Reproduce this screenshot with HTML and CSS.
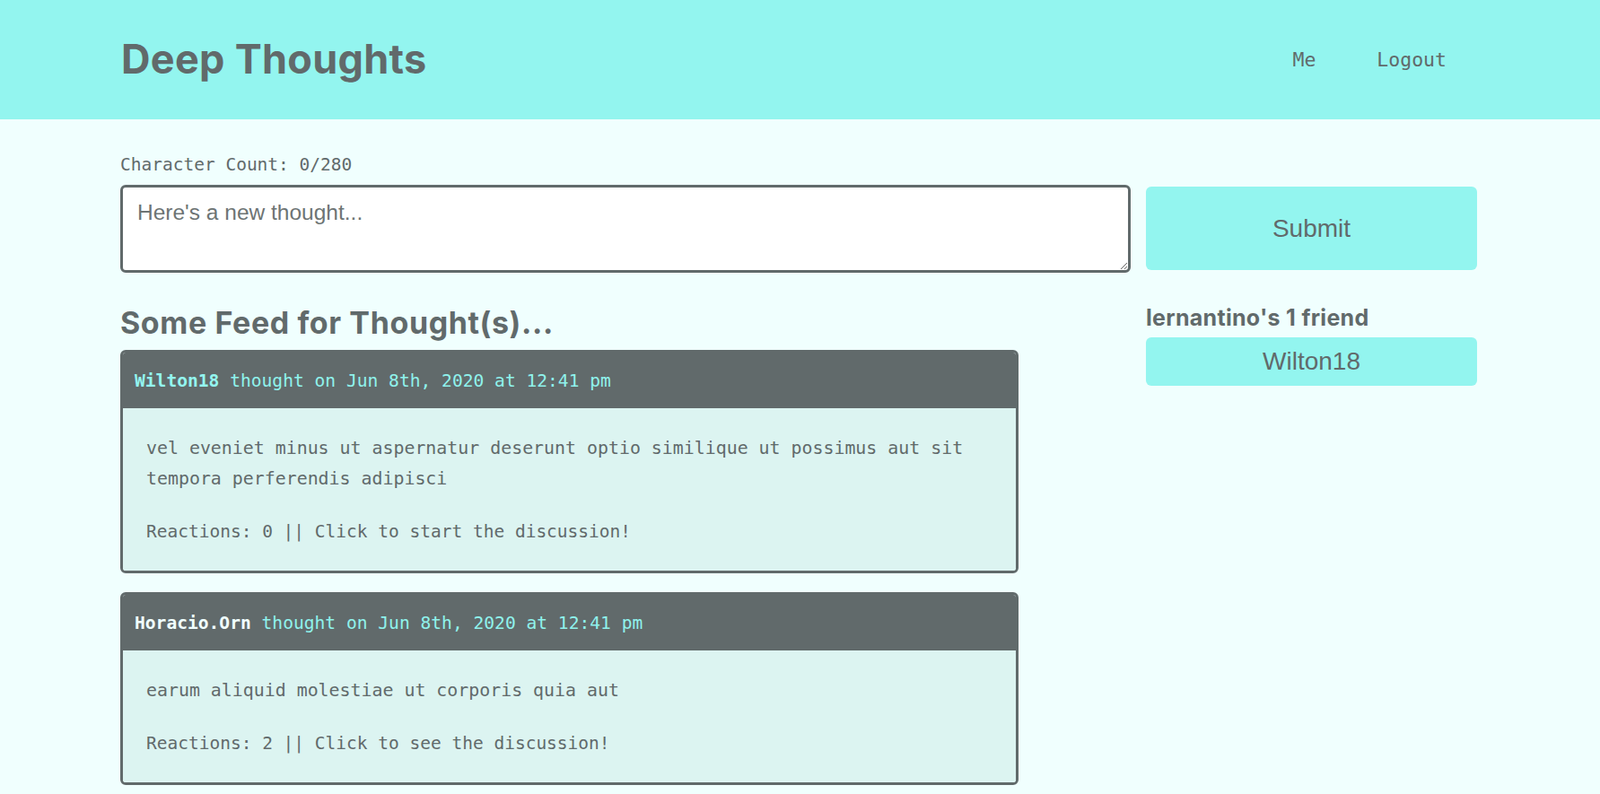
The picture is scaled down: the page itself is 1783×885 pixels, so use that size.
FILE: index.html
```html
<!DOCTYPE html>
<html lang="en">
<head>
<meta charset="utf-8">
<title>Deep Thoughts</title>
<link rel="stylesheet" href="styles.css">
</head>
<body>
<header class="site-header">
  <div class="container header-inner">
    <h1 class="brand">Deep Thoughts</h1>
    <nav class="nav">
      <a class="nav-link" href="#">Me</a>
      <a class="nav-link" href="#">Logout</a>
    </nav>
  </div>
</header>
<main class="container main">
  <form class="thought-form">
    <div class="form-left">
      <p class="char-count">Character Count: 0/280</p>
      <textarea class="thought-input" placeholder="Here's a new thought..."></textarea>
    </div>
    <button class="btn submit-btn" type="button">Submit</button>
  </form>
  <div class="content-row">
    <section class="feed">
      <h2 class="feed-title">Some Feed for Thought(s)...</h2>
      <article class="card">
        <div class="card-header"><span class="author author-teal">Wilton18</span> thought on Jun 8th, 2020 at 12:41 pm</div>
        <div class="card-body">
          <p class="card-text">vel eveniet minus ut aspernatur deserunt optio similique ut possimus aut sit tempora perferendis adipisci</p>
          <p class="card-meta">Reactions: 0 || Click to start the discussion!</p>
        </div>
      </article>
      <article class="card">
        <div class="card-header"><span class="author author-light">Horacio.Orn</span> thought on Jun 8th, 2020 at 12:41 pm</div>
        <div class="card-body">
          <p class="card-text">earum aliquid molestiae ut corporis quia aut</p>
          <p class="card-meta">Reactions: 2 || Click to see the discussion!</p>
        </div>
      </article>
    </section>
    <aside class="friends">
      <h3 class="friends-title">lernantino's 1 friend</h3>
      <a class="btn friend-btn" href="#">Wilton18</a>
    </aside>
  </div>
</main>
</body>
</html>
```
FILE: styles.css
```css
html, body {
  margin: 0;
  padding: 0;
}
body {
  background: #f0fffe;
  color: #616a6b;
  font-family: "DejaVu Sans Mono", "Liberation Mono", monospace;
  min-height: 885px;
}
.container {
  width: 1512px;
  margin-left: 134px;
}
.site-header {
  background: #93f5ef;
  height: 133px;
}
.header-inner {
  display: flex;
  align-items: center;
  justify-content: space-between;
  height: 133px;
}
.brand {
  margin: 0 0 2px 1px;
  font-family: "Inter", "Lato", sans-serif;
  font-weight: 700;
  font-size: 45px;
  letter-spacing: 0.3px;
  line-height: 1;
  color: #616a6b;
}
.nav {
  display: flex;
  margin-bottom: 1px;
}
.nav-link {
  color: #616a6b;
  text-decoration: none;
  font-size: 21.5px;
  padding: 0 34px;
}
.thought-form {
  display: flex;
  gap: 17px;
  align-items: flex-end;
}
.form-left {
  width: 1126px;
}
.char-count {
  margin: 39px 0 10px 0;
  font-size: 19.5px;
  line-height: 24px;
}
.thought-input {
  display: block;
  box-sizing: border-box;
  width: 1126px;
  height: 98px;
  border: 3px solid #616a6b;
  border-radius: 6px;
  background: #ffffff;
  padding: 14px 16px;
  font-family: "Liberation Sans", Arial, sans-serif;
  font-size: 24.5px;
  color: #616a6b;
  resize: vertical;
}
.thought-input::placeholder {
  color: #6d7474;
}
.btn {
  display: flex;
  align-items: center;
  justify-content: center;
  box-sizing: border-box;
  width: 369px;
  background: #93f5ef;
  border: none;
  border-radius: 6px;
  color: #616a6b;
  font-family: "Liberation Sans", Arial, sans-serif;
  font-size: 28px;
  text-decoration: none;
}
.submit-btn {
  height: 93px;
  margin-bottom: 3px;
}
.content-row {
  display: flex;
  gap: 17px;
  align-items: flex-start;
}
.feed {
  width: 1126px;
}
.feed-title {
  margin: 36px 0 10px 0;
  font-family: "Inter", "Lato", sans-serif;
  font-weight: 700;
  font-size: 34px;
  letter-spacing: 0.6px;
  line-height: 40px;
}
.card {
  width: 1001px;
  box-sizing: border-box;
  border: 3px solid #616a6b;
  border-radius: 6px;
  margin-bottom: 21px;
  overflow: hidden;
}
.card-header {
  background: #616a6b;
  color: #8ff2ec;
  font-size: 19.6px;
  line-height: 33px;
  padding: 15px 13px 14px;
}
.author {
  font-weight: 700;
}
.author-teal {
  color: #93f5ef;
}
.author-light {
  color: #f0fffe;
}
.card-body {
  background: #dcf4f1;
  padding: 28px 26px 26px;
}
.card-text {
  margin: 0 0 25px 0;
  font-size: 19.9px;
  line-height: 34px;
}
.card-meta {
  margin: 0;
  font-size: 19.5px;
  line-height: 34px;
}
.friends {
  width: 369px;
}
.friends-title {
  margin: 35px 0 7px 0;
  font-family: "Inter", "Lato", sans-serif;
  font-weight: 700;
  font-size: 25px;
  letter-spacing: 0.3px;
  line-height: 30px;
}
.friend-btn {
  height: 54px;
}
```
